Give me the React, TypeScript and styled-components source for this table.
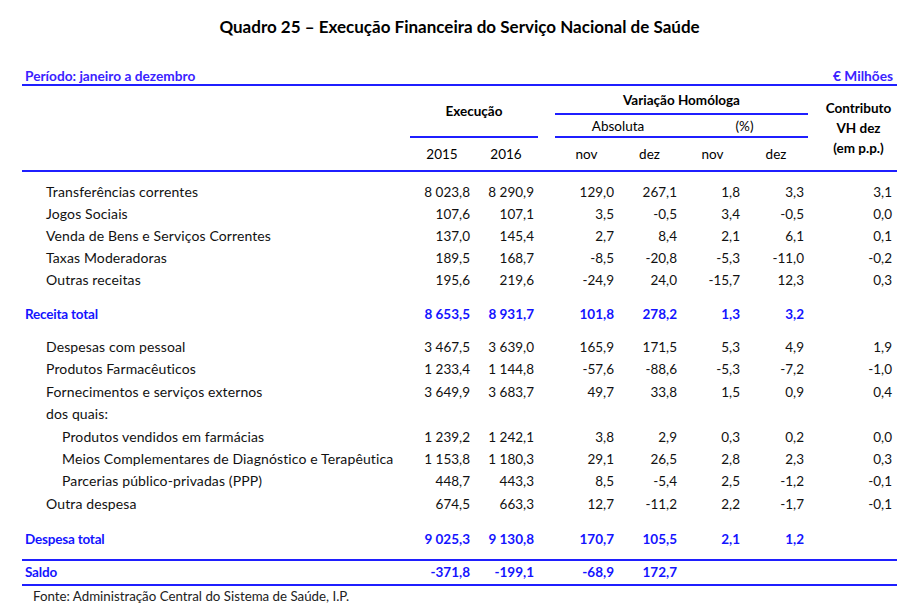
import React from "react";
import styled, { createGlobalStyle } from "styled-components";

const Global = createGlobalStyle`
  html, body { margin: 0; padding: 0; background: #fff; }
  body { font-family: Lato, "Open Sans", sans-serif; color: #111; }
`;

const BLUE = "#1f1fff";
const COLS = "388px 64px 64px 17px 63px 63px 63px 64px 12px 77px";

const Page = styled.div`
  width: 920px;
  height: 605px;
  box-sizing: border-box;
  padding: 0 23px 0 22px;
  overflow: hidden;
`;

const Title = styled.h1`
  margin: 0;
  padding-top: 16px;
  font-size: 17px;
  line-height: 22px;
  font-weight: 700;
  text-align: center;
  color: #000;
`;

const PeriodBar = styled.div`
  margin-top: 29px;
  display: flex;
  justify-content: space-between;
  align-items: flex-end;
  height: 17px;
  line-height: 17px;
  padding: 0 4px 0 3px;
  border-bottom: 2px solid ${BLUE};
  color: #3a22ff;
  font-weight: 700;
  font-size: 13.7px;
`;

const HeaderGrid = styled.div`
  display: grid;
  grid-template-columns: ${COLS};
  grid-template-rows: 29px 23px 32px;
  border-bottom: 2px solid ${BLUE};
  font-size: 13.5px;
  color: #000;
`;

const HeadCell = styled.div<{ $col: string; $row: string; $bold?: boolean; $line?: boolean }>`
  grid-column: ${(p) => p.$col};
  grid-row: ${(p) => p.$row};
  display: flex;
  align-items: center;
  justify-content: center;
  text-align: center;
  font-weight: ${(p) => (p.$bold ? 700 : 400)};
  border-bottom: ${(p) => (p.$line ? `2px solid ${BLUE}` : "none")};
  line-height: 20px;
`;

const Body = styled.div`
  padding-top: 9px;
`;

const Row = styled.div<{ $h: number; $total?: boolean; $gapTop?: number }>`
  display: grid;
  grid-template-columns: ${COLS};
  height: ${(p) => p.$h}px;
  line-height: ${(p) => p.$h}px;
  margin-top: ${(p) => p.$gapTop ?? 0}px;
  font-size: 13.5px;
  font-weight: ${(p) => (p.$total ? 700 : 400)};
  color: ${(p) => (p.$total ? "#1414ff" : "#111")};
  white-space: nowrap;
`;

const SaldoRow = styled(Row)`
  border-top: 2px solid ${BLUE};
  border-bottom: 2px solid ${BLUE};
  padding-top: 1px;
  line-height: 20px;
`;

const Label = styled.div<{ $indent: number; $total?: boolean }>`
  padding-left: ${(p) => p.$indent}px;
  font-size: ${(p) => (p.$total ? 13.5 : 14)}px;
  letter-spacing: ${(p) => (p.$total ? -0.2 : 0.12)}px;
`;

const Num = styled.div<{ $col: number }>`
  grid-column: ${(p) => p.$col};
  text-align: right;
  padding-right: ${(p) => (p.$col === 10 ? 5 : 4)}px;
`;

const Source = styled.div`
  padding-left: 11px;
  margin-top: 1px;
  font-size: 13.3px;
  line-height: 18px;
  color: #222;
`;

type Line = { label: string; level: 0 | 1 | 2; v: string[] };

const receitas: Line[] = [
  { label: "Transferências correntes", level: 1, v: ["8 023,8", "8 290,9", "129,0", "267,1", "1,8", "3,3", "3,1"] },
  { label: "Jogos Sociais", level: 1, v: ["107,6", "107,1", "3,5", "-0,5", "3,4", "-0,5", "0,0"] },
  { label: "Venda de Bens e Serviços Correntes", level: 1, v: ["137,0", "145,4", "2,7", "8,4", "2,1", "6,1", "0,1"] },
  { label: "Taxas Moderadoras", level: 1, v: ["189,5", "168,7", "-8,5", "-20,8", "-5,3", "-11,0", "-0,2"] },
  { label: "Outras receitas", level: 1, v: ["195,6", "219,6", "-24,9", "24,0", "-15,7", "12,3", "0,3"] },
];

const despesas: Line[] = [
  { label: "Despesas com pessoal", level: 1, v: ["3 467,5", "3 639,0", "165,9", "171,5", "5,3", "4,9", "1,9"] },
  { label: "Produtos Farmacêuticos", level: 1, v: ["1 233,4", "1 144,8", "-57,6", "-88,6", "-5,3", "-7,2", "-1,0"] },
  { label: "Fornecimentos e serviços externos", level: 1, v: ["3 649,9", "3 683,7", "49,7", "33,8", "1,5", "0,9", "0,4"] },
  { label: "dos quais:", level: 1, v: [] },
  { label: "Produtos vendidos em  farmácias", level: 2, v: ["1 239,2", "1 242,1", "3,8", "2,9", "0,3", "0,2", "0,0"] },
  { label: "Meios Complementares de Diagnóstico e Terapêutica", level: 2, v: ["1 153,8", "1 180,3", "29,1", "26,5", "2,8", "2,3", "0,3"] },
  { label: "Parcerias público-privadas (PPP)", level: 2, v: ["448,7", "443,3", "8,5", "-5,4", "2,5", "-1,2", "-0,1"] },
  { label: "Outra despesa", level: 1, v: ["674,5", "663,3", "12,7", "-11,2", "2,2", "-1,7", "-0,1"] },
];

const NUM_COLS = [2, 3, 5, 6, 7, 8, 10];
const INDENT = [3, 24, 40];

const Cells = ({ v }: { v: string[] }) => (
  <>
    {v.map((x, i) => (
      <Num key={i} $col={NUM_COLS[i]}>
        {x}
      </Num>
    ))}
  </>
);

export default function App() {
  return (
    <Page>
      <Global />
      <Title>Quadro 25 – Execução Financeira do Serviço Nacional de Saúde</Title>
      <PeriodBar>
        <span>Período: janeiro a dezembro</span>
        <span>€ Milhões</span>
      </PeriodBar>
      <HeaderGrid>
        <HeadCell $col="2 / 4" $row="1 / 3" $bold $line>
          Execução
        </HeadCell>
        <HeadCell $col="5 / 9" $row="1" $bold $line>
          Variação Homóloga
        </HeadCell>
        <HeadCell $col="5 / 7" $row="2" $line>
          Absoluta
        </HeadCell>
        <HeadCell $col="7 / 9" $row="2" $line>
          (%)
        </HeadCell>
        <HeadCell $col="2" $row="3">2015</HeadCell>
        <HeadCell $col="3" $row="3">2016</HeadCell>
        <HeadCell $col="5" $row="3">nov</HeadCell>
        <HeadCell $col="6" $row="3">dez</HeadCell>
        <HeadCell $col="7" $row="3">nov</HeadCell>
        <HeadCell $col="8" $row="3">dez</HeadCell>
        <HeadCell $col="10" $row="1 / 4" $bold>
          Contributo
          <br />
          VH dez
          <br />
          (em p.p.)
        </HeadCell>
      </HeaderGrid>
      <Body>
        {receitas.map((r) => (
          <Row key={r.label} $h={22}>
            <Label $indent={INDENT[r.level]}>{r.label}</Label>
            <Cells v={r.v} />
          </Row>
        ))}
        <Row $h={22} $total $gapTop={12}>
          <Label $indent={INDENT[0]} $total>Receita total</Label>
          <Cells v={["8 653,5", "8 931,7", "101,8", "278,2", "1,3", "3,2"]} />
        </Row>
        {despesas.map((r, i) => (
          <Row key={r.label} $h={22.4} $gapTop={i === 0 ? 11 : 0}>
            <Label $indent={INDENT[r.level]}>{r.label}</Label>
            <Cells v={r.v} />
          </Row>
        ))}
        <Row $h={22} $total $gapTop={13}>
          <Label $indent={INDENT[0]} $total>Despesa total</Label>
          <Cells v={["9 025,3", "9 130,8", "170,7", "105,5", "2,1", "1,2"]} />
        </Row>
        <SaldoRow $h={22} $total $gapTop={9}>
          <Label $indent={INDENT[0]} $total>Saldo</Label>
          <Cells v={["-371,8", "-199,1", "-68,9", "172,7"]} />
        </SaldoRow>
      </Body>
      <Source>Fonte: Administração Central do Sistema de Saúde, I.P.</Source>
    </Page>
  );
}
